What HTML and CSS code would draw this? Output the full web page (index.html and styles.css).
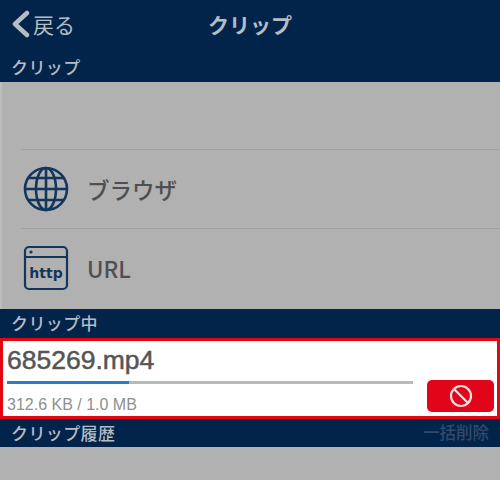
FILE: index.html
```html
<!DOCTYPE html>
<html lang="ja">
	<head>
		<meta charset="UTF-8">
		<title>クリップ</title>
		<link rel="stylesheet" href="styles.css">
	</head>
	<body>
		<div class="nav">
			<span class="back">
				<svg class="back-icon" width="20" height="30" viewBox="0 0 20 30">
					<path d="M17 4 L5 15 L17 26" fill="none" stroke="#b4bcc4" stroke-width="4.5" stroke-linecap="round" stroke-linejoin="round"/>
				</svg>
				戻る
			</span>
			<span class="nav-title">クリップ</span>
		</div>
		<div class="section-title first">クリップ</div>

		<div class="menu">
			<div class="menu-item browser">
				<svg width="46" height="46" viewBox="0 0 46 46" fill="none" stroke="#12365c" stroke-width="2.6">
					<circle cx="23" cy="23" r="21"/>
					<ellipse cx="23" cy="23" rx="10" ry="21"/>
					<path d="M23 2 V44 M2 23 H44 M5 12 H41 M5 34 H41"/>
				</svg>
				<span>ブラウザ</span>
			</div>
			<div class="menu-item">
				<svg width="46" height="46" viewBox="0 0 46 46" fill="none" stroke="#12365c" stroke-width="2.2">
					<rect x="2" y="2" width="42" height="42" rx="4"/>
					<path d="M2 12 H44"/>
					<circle cx="8" cy="7" r="1.6" fill="#12365c" stroke="none"/>
					<text x="23" y="33" text-anchor="middle" class="http">http</text>
				</svg>
				<span>URL</span>
			</div>
		</div>

		<div class="section-title">クリップ中</div>
		<div class="clip-box">
			<div class="clip-info">
				<div class="file-name">685269.mp4</div>
				<div class="progress"><div class="progress-fill" style="width: 30%"></div></div>
				<div class="file-size">312.6 KB / 1.0 MB</div>
			</div>
			<div class="stop-btn">
				<svg width="24" height="24" viewBox="0 0 24 24" fill="none" stroke="#f6dfe2" stroke-width="2.2">
					<circle cx="12" cy="12" r="10"/>
					<path d="M5 5 L19 19"/>
				</svg>
			</div>
		</div>
		<div class="section-title history">
			<span>クリップ履歴</span>
			<span class="clear-all">一括削除</span>
		</div>
		<div class="bottom"></div>
	</body>
</html>
```

FILE: styles.css
```css
* {
	box-sizing: border-box;
	margin: 0;
	padding: 0;
}
body {
	width: 500px;
	height: 480px;
	overflow: hidden;
	background-color: #b1b1b1;
	font-family: "Noto Sans CJK JP", "Liberation Sans", sans-serif;
}
.nav {
	position: relative;
	height: 50px;
	background-color: #02244a;
	display: flex;
	align-items: center;
	justify-content: center;
	color: #b4bcc4;
}
.back {
	position: absolute;
	left: 10px;
	top: 9px;
	display: flex;
	align-items: center;
	gap: 3px;
	font-size: 21px;
	line-height: 30px;
}
.nav-title {
	font-size: 21px;
	font-weight: 700;
	margin-bottom: 2px;
}
.section-title {
	height: 29px;
	padding: 0 11px;
	background-color: #02244a;
	color: #b4bcc4;
	font-size: 17px;
	font-weight: 500;
	letter-spacing: 0.4px;
	line-height: 27px;
}
.section-title.first {
	height: 32px;
	line-height: 34px;
}
.menu {
	height: 227px;
	padding: 67px 0 0 19px;
	border-left: 2px solid #bdbdbd;
}
.menu-item {
	height: 79px;
	border-top: 1px solid #a0a0a0;
	display: flex;
	align-items: center;
	gap: 18px;
	padding-left: 2px;
	color: #4f4f4f;
	font-size: 22.5px;
	font-weight: 500;
}
.http {
	font-family: "DejaVu Sans", sans-serif;
	font-size: 14px;
	font-weight: 700;
	fill: #12365c;
	stroke: none;
}
.clip-box {
	height: 81px;
	border: 3px solid #e30613;
	background-color: #fff;
	display: flex;
	padding: 0 3px 0 4px;
}
.clip-info {
	width: 406px;
}
.file-name {
	margin-top: 2px;
	color: #555;
	font-family: "Liberation Sans", sans-serif;
	font-size: 26.5px;
	font-weight: 400;
	line-height: 34px;
	-webkit-text-stroke: 0.5px #555;
}
.progress {
	height: 3px;
	margin-top: 4px;
	background-color: #b9b9b9;
}
.progress-fill {
	height: 3px;
	background-color: #2a7cc7;
}
.file-size {
	margin-top: 12px;
	color: #8f8f8f;
	font-family: "Liberation Sans", sans-serif;
	font-size: 16px;
	line-height: 18px;
}
.stop-btn {
	width: 67px;
	height: 32px;
	margin: 39px 0 0 14px;
	border-radius: 5px;
	background-color: #e20519;
	display: flex;
	align-items: center;
	justify-content: center;
}
.history {
	height: 28px;
	display: flex;
	justify-content: space-between;
	padding-right: 11px;
}
.clear-all {
	color: #33496a;
	font-size: 16.5px;
	letter-spacing: 0;
}
.bottom {
	height: 33px;
}
```
